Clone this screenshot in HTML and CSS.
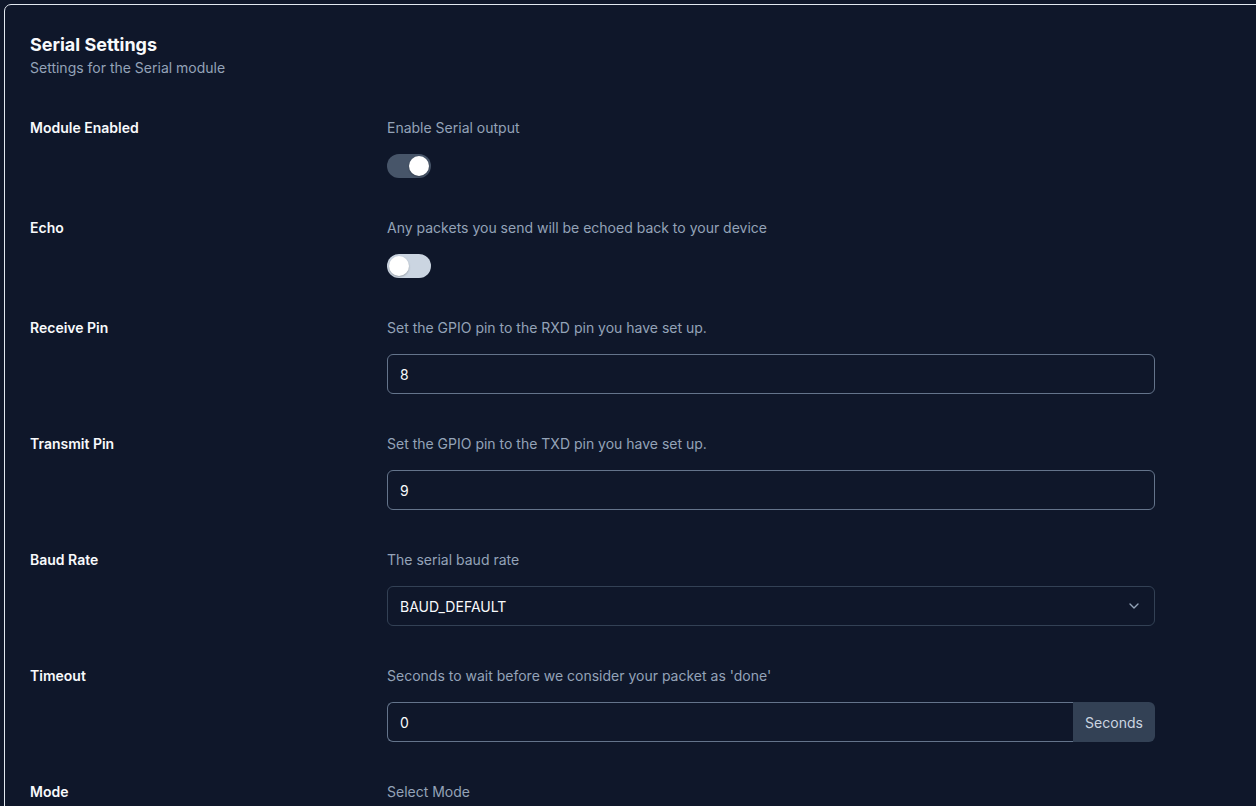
FILE: index.html
```html
<!DOCTYPE html>
<html>
<head>
<meta charset="utf-8">
<link rel="stylesheet" href="styles.css">
</head>
<body>
<div class="card">
  <div class="header">
    <h1 class="title">Serial Settings</h1>
    <p class="subtitle">Settings for the Serial module</p>
  </div>
  <div class="form">
    <div class="row">
      <div class="label">Module Enabled</div>
      <div class="field">
        <div class="desc">Enable Serial output</div>
        <div class="toggle on"><span class="thumb"></span></div>
      </div>
    </div>
    <div class="row">
      <div class="label">Echo</div>
      <div class="field">
        <div class="desc">Any packets you send will be echoed back to your device</div>
        <div class="toggle off"><span class="thumb"></span></div>
      </div>
    </div>
    <div class="row">
      <div class="label">Receive Pin</div>
      <div class="field">
        <div class="desc">Set the GPIO pin to the RXD pin you have set up.</div>
        <div class="input">8</div>
      </div>
    </div>
    <div class="row">
      <div class="label">Transmit Pin</div>
      <div class="field">
        <div class="desc">Set the GPIO pin to the TXD pin you have set up.</div>
        <div class="input">9</div>
      </div>
    </div>
    <div class="row">
      <div class="label">Baud Rate</div>
      <div class="field">
        <div class="desc">The serial baud rate</div>
        <div class="select">
          <span>BAUD_DEFAULT</span>
          <svg class="chev" width="16" height="16" viewBox="0 0 24 24" fill="none" stroke="currentColor" stroke-width="2" stroke-linecap="round" stroke-linejoin="round"><path d="m6 9 6 6 6-6"/></svg>
        </div>
      </div>
    </div>
    <div class="row">
      <div class="label">Timeout</div>
      <div class="field">
        <div class="desc">Seconds to wait before we consider your packet as 'done'</div>
        <div class="group">
          <div class="input grouped">0</div>
          <div class="addon">Seconds</div>
        </div>
      </div>
    </div>
    <div class="row">
      <div class="label">Mode</div>
      <div class="field">
        <div class="desc">Select Mode</div>
        <div class="select">
          <span>DEFAULT</span>
        </div>
      </div>
    </div>
  </div>
</div>
</body>
</html>
```
FILE: styles.css
```css
html, body {
  margin: 0;
  padding: 0;
  background: #0f172a;
  overflow: hidden;
  height: 806px;
}
body {
  font-family: Inter, "Noto Sans", sans-serif;
  color: #f8fafc;
}
.card {
  margin: 4px 0 0 4px;
  width: 1320px;
  border: 1px solid #e2e8f0;
  border-radius: 7px;
  padding: 25px;
  background: #0f172a;
}
.header {
  margin-bottom: 40px;
}
.title {
  margin: 0;
  padding-top: 1px;
  font-size: 18px;
  line-height: 27px;
  font-weight: 700;
  color: #f8fafc;
}
.subtitle {
  margin: 0;
  font-size: 14px;
  line-height: 20px;
  color: #94a3b8;
}
.form {
  display: flex;
  flex-direction: column;
  gap: 40px;
}
.row {
  display: grid;
  grid-template-columns: 357px 768px;
}
.label {
  font-size: 14px;
  line-height: 20px;
  font-weight: 600;
  color: #f8fafc;
}
.field {
  display: flex;
  flex-direction: column;
  gap: 16px;
}
.desc {
  font-size: 14px;
  line-height: 20px;
  color: #94a3b8;
}
.toggle {
  width: 44px;
  height: 24px;
  border-radius: 12px;
  display: flex;
  align-items: center;
  padding: 2px;
  box-sizing: border-box;
}
.toggle.on {
  background: #475569;
  justify-content: flex-end;
}
.toggle.off {
  background: #cbd5e1;
  justify-content: flex-start;
}
.thumb {
  width: 20px;
  height: 20px;
  border-radius: 50%;
  background: #ffffff;
  box-shadow: 0 1px 2px rgba(0,0,0,0.25);
}
.input {
  height: 40px;
  box-sizing: border-box;
  border: 1px solid #64748b;
  border-radius: 6px;
  padding: 0 12px;
  display: flex;
  align-items: center;
  font-size: 14px;
  color: #f8fafc;
  background: #0f172a;
}
.select {
  height: 40px;
  box-sizing: border-box;
  border: 1px solid #334155;
  border-radius: 6px;
  padding: 0 12px;
  display: flex;
  align-items: center;
  justify-content: space-between;
  font-size: 14px;
  color: #f8fafc;
}
.chev {
  color: #94a3b8;
  margin-right: 0;
}
.group {
  display: flex;
  height: 40px;
}
.input.grouped {
  flex: 1;
  border-radius: 6px 0 0 6px;
  border-right: none;
}
.addon {
  width: 82px;
  background: #334155;
  border-radius: 0 6px 6px 0;
  display: flex;
  align-items: center;
  justify-content: center;
  font-size: 14px;
  color: #cbd5e1;
}
```
